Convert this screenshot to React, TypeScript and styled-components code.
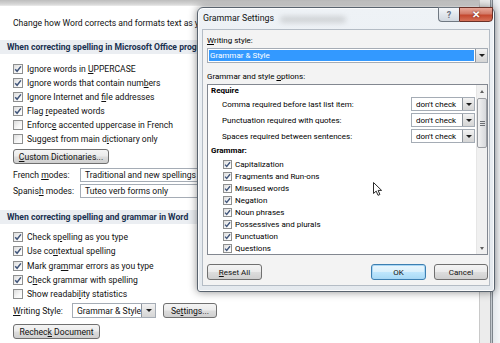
import React from "react";
import styled, { createGlobalStyle, css } from "styled-components";

const UI = `"Roboto", "Open Sans", "Noto Sans", sans-serif`;

const GlobalStyle = createGlobalStyle`
  *, *::before, *::after { box-sizing: border-box; }
  html, body { margin: 0; padding: 0; background: #fff; }
  body { font-family: ${UI}; color: #111; }
  #root { width: 500px; height: 343px; }
`;

const Screen = styled.div`
  position: relative;
  width: 500px;
  height: 343px;
  overflow: hidden;
  display: flex;
  background: #fff;
  font-family: ${UI};
  font-size: 8.6px;
  color: #111;
`;

const Pane = styled.div`
  flex: 1;
  min-width: 0;
  display: flex;
  flex-direction: column;
`;

const TopStrip = styled.div`
  flex: none;
  height: 6px;
  background: linear-gradient(#bdbdbd, #d6d6d6 70%, #ececec);
`;

const Intro = styled.div`
  margin: 10px 0 0 13px;
  height: 14px;
  line-height: 14px;
  white-space: nowrap;
`;

const SectionHeader = styled.div<{ $top: number }>`
  margin-top: ${(p) => p.$top}px;
  height: 14px;
  line-height: 14px;
  padding-left: 7px;
  background: #ebeef2;
  color: #1a3150;
  font-weight: 700;
  white-space: nowrap;
`;

const CheckList = styled.div<{ $top: number }>`
  margin: ${(p) => p.$top}px 0 0 13px;
  display: flex;
  flex-direction: column;
`;

const CheckRow = styled.div<{ $h: number; $gap: number }>`
  height: ${(p) => p.$h}px;
  display: flex;
  align-items: center;
  gap: ${(p) => p.$gap}px;
  white-space: nowrap;
`;

const Box = styled.span<{ $size: number }>`
  flex: none;
  width: ${(p) => p.$size}px;
  height: ${(p) => p.$size}px;
  border: 1px solid #8e8f8f;
  background: linear-gradient(135deg, #dcdcdc, #f7f7f7 60%, #ffffff);
  display: flex;
  align-items: center;
  justify-content: center;
`;

const Key = styled.span`
  text-decoration: underline;
  text-underline-offset: 1px;
`;

const Check = ({ on, size = 10 }: { on: boolean; size?: number }) => (
  <Box $size={size}>
    {on && (
      <svg width={size - 2} height={size - 2} viewBox="0 0 8 8">
        <path d="M1.2 4.2 L3.1 6.3 L6.9 1.4" fill="none" stroke="#40557a" strokeWidth="1.5" />
      </svg>
    )}
  </Box>
);

const Button = styled.div<{ $w: number; $h?: number; $focus?: boolean }>`
  flex: none;
  width: ${(p) => p.$w}px;
  height: ${(p) => p.$h ?? 15}px;
  border: 1px solid #707070;
  border-radius: 3px;
  background: linear-gradient(#f4f4f4 0%, #ebebeb 48%, #dddddd 52%, #cfcfcf 100%);
  display: flex;
  align-items: center;
  justify-content: center;
  white-space: nowrap;
  color: #111;
  ${(p) =>
    p.$focus &&
    css`
      border-color: #3c7fb1;
      box-shadow: inset 0 0 0 1px #a9d7f5;
      background: linear-gradient(#eaf6fd 0%, #d9f0fc 48%, #bee6fd 52%, #a7d9f5 100%);
    `}
`;

const PlainButtonRow = styled.div<{ $top: number }>`
  margin: ${(p) => p.$top}px 0 0 13px;
  display: flex;
  align-items: center;
`;

const FieldRow = styled.div<{ $top: number; $h: number }>`
  margin: ${(p) => p.$top}px 0 0 13px;
  height: ${(p) => p.$h}px;
  display: flex;
  align-items: center;
  white-space: nowrap;
`;

const FieldLabel = styled.span<{ $w: number }>`
  flex: none;
  width: ${(p) => p.$w}px;
`;

const Combo = styled.div<{ $w: number; $h: number }>`
  flex: none;
  width: ${(p) => p.$w}px;
  height: ${(p) => p.$h}px;
  border: 1px solid #a5acb5;
  background: #fff;
  display: flex;
  align-items: stretch;
  overflow: hidden;
`;

const ComboText = styled.span<{ $hl?: boolean }>`
  flex: 1;
  min-width: 0;
  padding-left: ${(p) => (p.$hl ? 1 : 4)}px;
  display: flex;
  align-items: center;
  white-space: nowrap;
  overflow: hidden;
  ${(p) =>
    p.$hl &&
    css`
      margin: 1px;
      background: #3399ff;
      color: #fff;
    `}
`;

const ComboArrow = styled.span<{ $w: number }>`
  flex: none;
  width: ${(p) => p.$w}px;
  border-left: 1px solid #8d949c;
  background: linear-gradient(#f3f3f3, #e2e2e2 50%, #d5d5d5);
  display: flex;
  align-items: center;
  justify-content: center;
  &::after {
    content: "";
    border-left: 3px solid transparent;
    border-right: 3px solid transparent;
    border-top: 3px solid #1e1e1e;
  }
`;

const Gap = styled.span<{ $w: number }>`
  flex: none;
  width: ${(p) => p.$w}px;
`;

const ScrollTrack = styled.div`
  flex: none;
  width: 11px;
  border-left: 1px solid #c9c9c9;
  background: #ececec;
`;

const WindowEdge = styled.div`
  flex: none;
  width: 3px;
  border-left: 1px solid #8a9096;
  border-right: 1px solid #7d848b;
  background: #c2c8ce;
`;

const Outside = styled.div`
  flex: none;
  width: 7px;
  background: linear-gradient(90deg, #e4e8ec, #f4f6f8);
`;

/* ---------- dialog ---------- */

const Dialog = styled.div`
  position: absolute;
  left: 197px;
  top: 7px;
  width: 298px;
  height: 285px;
  border: 1px solid #59636e;
  border-radius: 6px 6px 3px 3px;
  background: linear-gradient(#eef2f6, #e4e9ee);
  box-shadow: 0 0 9px rgba(0, 0, 0, 0.45), inset 0 0 0 1px rgba(255, 255, 255, 0.8);
  display: flex;
  flex-direction: column;
  padding: 0 4px 5px 4px;
`;

const TitleBar = styled.div`
  flex: none;
  height: 21px;
  display: flex;
  align-items: flex-start;
`;

const TitleText = styled.span`
  padding-left: 1px;
  height: 21px;
  line-height: 21px;
  font-size: 8.8px;
  color: #111;
  white-space: nowrap;
`;

const Smudge = styled.span`
  margin: 8px 0 0 6px;
  width: 66px;
  height: 7px;
  border-radius: 4px;
  background: rgba(110, 110, 110, 0.22);
  filter: blur(2.5px);
`;

const TitleSpacer = styled.span`
  flex: 1;
`;

const CaptionButton = styled.span<{ $kind: "help" | "close" }>`
  flex: none;
  margin-top: -1px;
  height: 15px;
  display: flex;
  align-items: center;
  justify-content: center;
  font-weight: 700;
  ${(p) =>
    p.$kind === "help"
      ? css`
          width: 21px;
          border: 1px solid #6f7882;
          border-right: none;
          border-radius: 0 0 0 4px;
          background: linear-gradient(#f5f7fa, #e1e6ec 50%, #d1d8e0);
          color: #6a7280;
          font-size: 9px;
        `
      : css`
          width: 34px;
          margin-right: -3px;
          border: 1px solid #6a3128;
          border-radius: 0 0 4px 0;
          background: linear-gradient(#e9a99a, #d27a68 45%, #c4482f 55%, #d67158);
          color: #fff;
          font-size: 10px;
          text-shadow: 0 0 2px #5a1a10;
        `}
`;

const Client = styled.div`
  flex: 1;
  border: 1px solid #b4bcc5;
  background: #f3f3f3;
  padding: 0 1px 5px 4px;
  display: flex;
  flex-direction: column;
  font-size: 8px;
  color: #000;
`;

const DlgLabel = styled.div<{ $top: number }>`
  margin-top: ${(p) => p.$top}px;
  height: 12px;
  line-height: 11px;
  white-space: nowrap;
`;

const DlgCombo = styled.div`
  margin-top: 1px;
`;

const ListBox = styled.div`
  margin-top: 1px;
  height: 171px;
  border: 1px solid #828790;
  background: #fff;
  display: flex;
`;

const ListBody = styled.div`
  flex: 1;
  padding-right: 1px;
  display: flex;
  flex-direction: column;
`;

const GroupTitle = styled.div<{ $h: number }>`
  height: ${(p) => p.$h}px;
  line-height: ${(p) => p.$h}px;
  padding-left: 3px;
  font-weight: 700;
`;

const OptionRow = styled.div`
  height: 16px;
  display: flex;
  align-items: center;
  padding-left: 14px;
  white-space: nowrap;
`;

const OptionLabel = styled.span`
  flex: 1;
`;

const ScrollBar = styled.div`
  flex: none;
  width: 11px;
  background: #f0f0f0;
  border-left: 1px solid #e6e6e6;
  display: flex;
  flex-direction: column;
  align-items: center;
`;

const ScrollArrow = styled.span<{ $dir: "up" | "down" }>`
  flex: none;
  height: 12px;
  display: flex;
  align-items: center;
  justify-content: center;
  &::after {
    content: "";
    border-left: 2.5px solid transparent;
    border-right: 2.5px solid transparent;
    ${(p) =>
      p.$dir === "up"
        ? css`border-bottom: 3px solid #606060;`
        : css`border-top: 3px solid #606060;`}
  }
`;

const Thumb = styled.span`
  flex: none;
  margin-top: 1px;
  width: 10px;
  height: 50px;
  border: 1px solid #9a9da2;
  border-radius: 2px;
  background: linear-gradient(90deg, #f3f3f3, #e2e3e5 55%, #d6d8db);
  display: flex;
  align-items: center;
  justify-content: center;
`;

const Grip = styled.span`
  width: 5px;
  height: 5px;
  background: repeating-linear-gradient(#6c6f74 0 1px, transparent 1px 2px);
`;

const ScrollFill = styled.span`
  flex: 1;
`;

const ListCheckRow = styled.div`
  height: 12px;
  display: flex;
  align-items: center;
  gap: 3px;
  padding-left: 15px;
  white-space: nowrap;
`;

const DlgButtons = styled.div`
  margin-top: 9px;
  display: flex;
  align-items: center;
`;

const ButtonSpacer = styled.span`
  flex: 1;
`;

const Cursor = styled.svg`
  position: absolute;
  left: 373px;
  top: 182px;
`;

const grammarItems = [
  "Capitalization",
  "Fragments and Run-ons",
  "Misused words",
  "Negation",
  "Noun phrases",
  "Possessives and plurals",
  "Punctuation",
  "Questions",
];

const requireItems = [
  "Comma required before last list item:",
  "Punctuation required with quotes:",
  "Spaces required between sentences:",
];

export default function App() {
  return (
    <>
      <GlobalStyle />
      <Screen>
        <Pane>
          <TopStrip />
          <Intro>Change how Word corrects and formats text as you type.</Intro>

          <SectionHeader $top={10}>When correcting spelling in Microsoft Office programs</SectionHeader>
          <CheckList $top={8}>
            <CheckRow $h={14} $gap={4}>
              <Check on />
              <span>Ignore words in <Key>U</Key>PPERCASE</span>
            </CheckRow>
            <CheckRow $h={14} $gap={4}>
              <Check on />
              <span>Ignore words that contain num<Key>b</Key>ers</span>
            </CheckRow>
            <CheckRow $h={14} $gap={4}>
              <Check on />
              <span>Ignore Internet and <Key>f</Key>ile addresses</span>
            </CheckRow>
            <CheckRow $h={14} $gap={4}>
              <Check on />
              <span>Flag <Key>r</Key>epeated words</span>
            </CheckRow>
            <CheckRow $h={14} $gap={4}>
              <Check on={false} />
              <span>Enforc<Key>e</Key> accented uppercase in French</span>
            </CheckRow>
            <CheckRow $h={14} $gap={4}>
              <Check on={false} />
              <span>Suggest from main d<Key>i</Key>ctionary only</span>
            </CheckRow>
          </CheckList>

          <PlainButtonRow $top={3}>
            <Button $w={96}><span><Key>C</Key>ustom Dictionaries...</span></Button>
          </PlainButtonRow>

          <FieldRow $top={4} $h={14}>
            <FieldLabel $w={67}>French <Key>m</Key>odes:</FieldLabel>
            <Combo $w={160} $h={14}>
              <ComboText>Traditional and new spellings</ComboText>
            </Combo>
          </FieldRow>
          <FieldRow $top={2} $h={14}>
            <FieldLabel $w={67}>Spanis<Key>h</Key> modes:</FieldLabel>
            <Combo $w={160} $h={14}>
              <ComboText>Tuteo verb forms only</ComboText>
            </Combo>
          </FieldRow>

          <SectionHeader $top={12}>When correcting spelling and grammar in Word</SectionHeader>
          <CheckList $top={6}>
            <CheckRow $h={14.25} $gap={4}>
              <Check on />
              <span>Check s<Key>p</Key>elling as you type</span>
            </CheckRow>
            <CheckRow $h={14.25} $gap={4}>
              <Check on />
              <span>Use co<Key>n</Key>textual spelling</span>
            </CheckRow>
            <CheckRow $h={14.25} $gap={4}>
              <Check on />
              <span>Mark gra<Key>m</Key>mar errors as you type</span>
            </CheckRow>
            <CheckRow $h={14.25} $gap={4}>
              <Check on />
              <span>C<Key>h</Key>eck grammar with spelling</span>
            </CheckRow>
            <CheckRow $h={14.25} $gap={4}>
              <Check on={false} />
              <span>Show readabi<Key>l</Key>ity statistics</span>
            </CheckRow>
          </CheckList>

          <FieldRow $top={2} $h={15}>
            <FieldLabel $w={59}><Key>W</Key>riting Style:</FieldLabel>
            <Combo $w={84} $h={15}>
              <ComboText>Grammar &amp; Style</ComboText>
              <ComboArrow $w={14} />
            </Combo>
            <Gap $w={7} />
            <Button $w={54}><span>Se<Key>t</Key>tings...</span></Button>
          </FieldRow>

          <PlainButtonRow $top={6}>
            <Button $w={87}><span>Rechec<Key>k</Key> Document</span></Button>
          </PlainButtonRow>
        </Pane>
        <ScrollTrack />
        <WindowEdge />
        <Outside />

        <Dialog>
          <TitleBar>
            <TitleText>Grammar Settings</TitleText>
            <Smudge />
            <TitleSpacer />
            <CaptionButton $kind="help">?</CaptionButton>
            <CaptionButton $kind="close">✕</CaptionButton>
          </TitleBar>
          <Client>
            <DlgLabel $top={5}><Key>W</Key>riting style:</DlgLabel>
            <DlgCombo>
              <Combo $w={281} $h={15}>
                <ComboText $hl>Grammar &amp; Style</ComboText>
                <ComboArrow $w={12} />
              </Combo>
            </DlgCombo>
            <DlgLabel $top={8}>Grammar and style <Key>o</Key>ptions:</DlgLabel>
            <ListBox>
              <ListBody>
                <GroupTitle $h={11}>Require</GroupTitle>
                {requireItems.map((t) => (
                  <OptionRow key={t}>
                    <OptionLabel>{t}</OptionLabel>
                    <Combo $w={64} $h={14}>
                      <ComboText>don't check</ComboText>
                      <ComboArrow $w={12} />
                    </Combo>
                  </OptionRow>
                ))}
                <GroupTitle $h={14}>Grammar:</GroupTitle>
                {grammarItems.map((t) => (
                  <ListCheckRow key={t}>
                    <Check on size={9} />
                    <span>{t}</span>
                  </ListCheckRow>
                ))}
              </ListBody>
              <ScrollBar>
                <ScrollArrow $dir="up" />
                <Thumb>
                  <Grip />
                </Thumb>
                <ScrollFill />
                <ScrollArrow $dir="down" />
              </ScrollBar>
            </ListBox>
            <DlgButtons>
              <Button $w={55} $h={16}><span><Key>R</Key>eset All</span></Button>
              <ButtonSpacer />
              <Button $w={55} $h={16} $focus>OK</Button>
              <Gap $w={8} />
              <Button $w={54} $h={16}>Cancel</Button>
            </DlgButtons>
          </Client>
        </Dialog>

        <Cursor width="10" height="15" viewBox="0 0 10 15">
          <path
            d="M0.5 0.5 L0.5 11.5 L3.2 9.1 L5 13.3 L6.9 12.5 L5.1 8.4 L8.6 8.4 Z"
            fill="#fff"
            stroke="#2a2a2a"
            strokeWidth="1"
            strokeLinejoin="round"
          />
        </Cursor>
      </Screen>
    </>
  );
}
